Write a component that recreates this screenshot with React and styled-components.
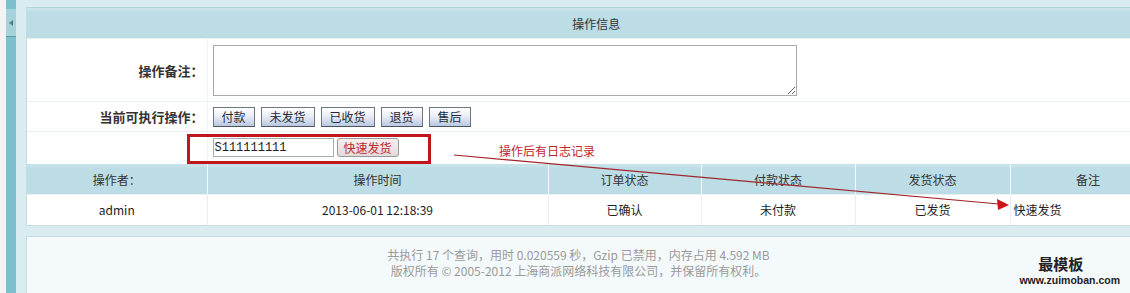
import React from 'react';
import styled, { createGlobalStyle } from 'styled-components';

const GlobalStyle = createGlobalStyle`
  html, body { margin: 0; padding: 0; }
  body {
    font-family: "Noto Sans CJK SC", "Liberation Sans", sans-serif;
    font-size: 12px;
    color: #333;
    overflow: hidden;
    background: #d9ecf0;
  }
`;

const Page = styled.div`
  display: flex;
  height: 293px;
`;

const LeftEdge = styled.div`
  width: 6px;
  background: #f1f3f5;
`;

const SideBar = styled.div`
  width: 10px;
  background: #7dbfcb;
  display: flex;
  flex-direction: column;
`;

const Toggle = styled.div`
  margin-top: 9px;
  height: 27px;
  background: #a6d2dc;
  border-bottom: 1px solid #5f9dab;
  display: flex;
  align-items: center;
  justify-content: center;
  &::before {
    content: "";
    border-style: solid;
    border-width: 3px 4px 3px 0;
    border-color: transparent #4f7f8b transparent transparent;
  }
`;

const Main = styled.div`
  flex: 1;
  min-width: 0;
  overflow: hidden;
  display: flex;
  flex-direction: column;
  padding: 7px 0 0 10px;
  background: #d9ecf0;
`;

const Panel = styled.div`
  position: relative;
  width: 1140px;
  background: #fff;
  border-top: 1px solid #b3d4dd;
  border-left: 1px solid #c3dde4;
  border-bottom: 1px solid #c5dde5;
`;

const Table = styled.table`
  width: 1139px;
  border-collapse: collapse;
  table-layout: fixed;
`;

const Row = styled.tr`
  border-bottom: 1px solid ${p => p.$line || '#e8f0f2'};
`;

const HeadCell = styled.th`
  height: ${p => p.$h || 30}px;
  padding: 0;
  font-weight: normal;
  color: #333;
  text-align: center;
  background: linear-gradient(#cde5eb, #bcdde5 4px);
  border-right: 1px solid #f2f9fb;
`;

const LabelCell = styled.td`
  height: ${p => p.$h}px;
  padding: 0 3px 0 0;
  text-align: right;
  font-size: 13px;
  font-weight: bold;
  color: #333;
  border-right: 1px solid #eef4f6;
`;

const FieldCell = styled.td`
  padding: 0 0 0 5px;
`;

const DataCell = styled.td`
  height: 29px;
  padding: 0 ${p => (p.$left ? '0 0 3px' : '0')};
  text-align: ${p => (p.$left ? 'left' : 'center')};
  color: #222;
  border-right: 1px solid #e6eff2;
`;

const Note = styled.textarea`
  display: block;
  box-sizing: border-box;
  width: 584px;
  height: 51px;
  margin: 0;
  border: 1px solid #a9a9a9;
  font: inherit;
`;

const Actions = styled.div`
  display: flex;
  gap: 6px;
`;

const ActButton = styled.button`
  height: 20px;
  padding: 0 8px;
  border: 1px solid #6f7780;
  border-bottom-color: #4c5560;
  background: linear-gradient(#ffffff, #e9eef6 45%, #b9c8df);
  font-family: inherit;
  font-size: 12px;
  line-height: 18px;
  color: #1f2a3a;
  cursor: pointer;
`;

const QuickRow = styled.div`
  display: flex;
  gap: 3px;
  align-items: center;
`;

const CodeInput = styled.input`
  box-sizing: border-box;
  width: 121px;
  height: 19px;
  padding: 0 1px;
  margin: 0;
  border: 1px solid #a5acb2;
  font-family: "Liberation Mono", monospace;
  font-size: 12px;
  color: #222;
`;

const QuickButton = styled.button`
  box-sizing: border-box;
  width: 62px;
  height: 19px;
  padding: 0;
  border: 1px solid #9a9a9a;
  border-radius: 3px;
  background: linear-gradient(#f8f0f0, #e2dada);
  font-family: inherit;
  font-size: 12px;
  line-height: 17px;
  color: #c0262e;
`;

const Overlay = styled.svg`
  position: absolute;
  left: 0;
  top: 0;
  pointer-events: none;
`;

const Remark = styled.span`
  position: absolute;
  left: 472px;
  top: 135px;
  color: #c0262e;
  font-size: 12px;
  line-height: 16px;
`;

const Footer = styled.div`
  margin-top: 10px;
  flex: 1;
  display: grid;
  grid-template-columns: 1fr auto 1fr;
  background: #f4f9fb;
  border-top: 1px solid #c5dde5;
  border-left: 1px solid #c5dde5;
`;

const Copy = styled.div`
  grid-column: 2;
  padding-top: 10px;
  text-align: center;
  color: #9a9a9a;
  font-size: 12px;
  line-height: 16px;
`;

const Logo = styled.div`
  grid-column: 3;
  justify-self: end;
  padding: 18px 10px 0 0;
  text-align: center;
  color: #222;
`;

const LogoName = styled.div`
  margin-right: 18px;
  font-family: "Noto Sans CJK SC", serif;
  font-size: 15px;
  line-height: 18px;
  font-weight: bold;
`;

const LogoUrl = styled.div`
  font-family: "Liberation Sans", sans-serif;
  font-size: 10.5px;
  line-height: 14px;
  font-weight: bold;
`;

const logRows = [
  { user: 'admin', time: '2013-06-01 12:18:39', order: '已确认', pay: '未付款', ship: '已发货', note: '快速发货' },
];

function App() {
  return (
    <>
      <GlobalStyle />
      <Page>
        <LeftEdge />
        <SideBar>
          <Toggle />
        </SideBar>
        <Main>
          <Panel>
            <Table>
              <colgroup>
                <col style={{ width: 180 }} />
                <col style={{ width: 341 }} />
                <col style={{ width: 153 }} />
                <col style={{ width: 154 }} />
                <col style={{ width: 155 }} />
                <col style={{ width: 156 }} />
              </colgroup>
              <tbody>
                <Row>
                  <HeadCell colSpan={6} $h={30}>操作信息</HeadCell>
                </Row>
                <Row>
                  <LabelCell $h={62}>操作备注：</LabelCell>
                  <FieldCell colSpan={5}>
                    <Note />
                  </FieldCell>
                </Row>
                <Row>
                  <LabelCell $h={29}>当前可执行操作：</LabelCell>
                  <FieldCell colSpan={5}>
                    <Actions>
                      <ActButton>付款</ActButton>
                      <ActButton>未发货</ActButton>
                      <ActButton>已收货</ActButton>
                      <ActButton>退货</ActButton>
                      <ActButton>售后</ActButton>
                    </Actions>
                  </FieldCell>
                </Row>
                <Row $line="#fff">
                  <LabelCell $h={31} />
                  <FieldCell colSpan={5}>
                    <QuickRow>
                      <CodeInput defaultValue="S111111111" />
                      <QuickButton>快速发货</QuickButton>
                    </QuickRow>
                  </FieldCell>
                </Row>
                <Row>
                  <HeadCell>操作者：</HeadCell>
                  <HeadCell>操作时间</HeadCell>
                  <HeadCell>订单状态</HeadCell>
                  <HeadCell>付款状态</HeadCell>
                  <HeadCell>发货状态</HeadCell>
                  <HeadCell>备注</HeadCell>
                </Row>
                {logRows.map((r, i) => (
                  <Row key={i} $line="#fff">
                    <DataCell>{r.user}</DataCell>
                    <DataCell>{r.time}</DataCell>
                    <DataCell>{r.order}</DataCell>
                    <DataCell>{r.pay}</DataCell>
                    <DataCell>{r.ship}</DataCell>
                    <DataCell $left>{r.note}</DataCell>
                  </Row>
                ))}
              </tbody>
            </Table>
            <Overlay width="1140" height="230" viewBox="0 0 1140 230">
              <rect x="161.5" y="127.5" width="241" height="27" fill="none" stroke="#c1161c" strokeWidth="3" />
              <line x1="427" y1="147" x2="972" y2="196" stroke="#a0262c" strokeWidth="1.2" />
              <polygon points="982,197 970,191 971,202" fill="#d0121a" />
            </Overlay>
            <Remark>操作后有日志记录</Remark>
          </Panel>
          <Footer>
            <Copy>
              <div>共执行 17 个查询，用时 0.020559 秒，Gzip 已禁用，内存占用 4.592 MB</div>
              <div>版权所有 © 2005-2012 上海商派网络科技有限公司，并保留所有权利。</div>
            </Copy>
            <Logo>
              <LogoName>最模板</LogoName>
              <LogoUrl>www.zuimoban.com</LogoUrl>
            </Logo>
          </Footer>
        </Main>
      </Page>
    </>
  );
}

export default App;
